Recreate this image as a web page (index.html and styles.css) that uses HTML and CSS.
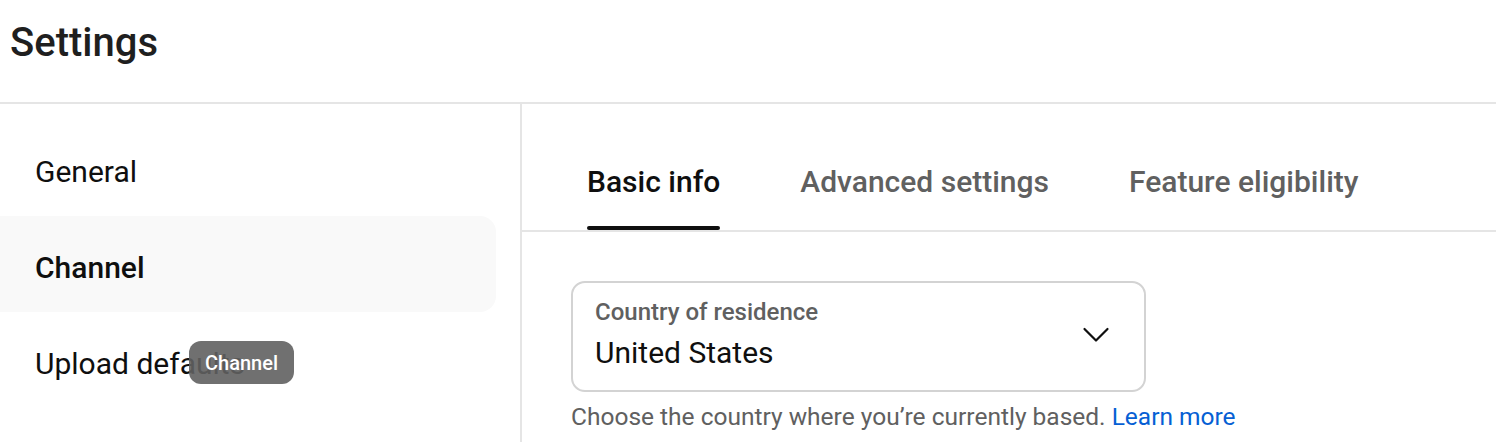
FILE: index.html
```html
<!DOCTYPE html>
<html lang="en">
<head>
<meta charset="utf-8">
<title>Settings</title>
<link rel="stylesheet" href="styles.css">
</head>
<body>
<div class="page">
  <header class="header">
    <h1 class="title">Settings</h1>
  </header>
  <div class="body">
    <nav class="sidebar">
      <div class="nav-item">General</div>
      <div class="nav-item active">Channel</div>
      <div class="nav-item">Upload defaults
        <div class="tooltip">Channel</div>
      </div>
    </nav>
    <main class="main">
      <div class="tabs">
        <div class="tab active"><span class="tab-label">Basic info</span><span class="indicator"></span></div>
        <div class="tab"><span class="tab-label">Advanced settings</span><span class="indicator"></span></div>
        <div class="tab"><span class="tab-label">Feature eligibility</span><span class="indicator"></span></div>
      </div>
      <div class="content">
        <div class="select">
          <div class="select-text">
            <div class="select-label">Country of residence</div>
            <div class="select-value">United States</div>
          </div>
          <svg class="chevron" width="28" height="16" viewBox="0 0 28 16" aria-hidden="true">
            <path d="M2.5 2 L14 13.5 L25.5 2" fill="none" stroke="#0f0f0f" stroke-width="2.2" stroke-linecap="round" stroke-linejoin="round"/>
          </svg>
        </div>
        <p class="helper">Choose the country where you’re currently based. <a class="link" href="#">Learn more</a></p>
      </div>
    </main>
  </div>
</div>
</body>
</html>
```

FILE: styles.css
```css
* { box-sizing: border-box; }
html, body { margin: 0; padding: 0; background: #ffffff; }
body {
  font-family: Roboto, "Noto Sans", "Liberation Sans", sans-serif;
  color: #0f0f0f;
  width: 1496px;
  height: 442px;
  overflow: hidden;
}
.page { display: flex; flex-direction: column; height: 100%; }
.header {
  height: 104px;
  border-bottom: 2px solid #e5e5e5;
  display: flex;
  align-items: flex-start;
  padding: 19px 0 0 10px;
}
.title {
  margin: 0;
  font-size: 40px;
  line-height: 48px;
  font-weight: 500;
  color: #1f1f1f;
}
.body { display: flex; flex: 1; }
.sidebar {
  width: 522px;
  flex: none;
  border-right: 2px solid #e5e5e5;
  padding: 16px 24px 0 0;
  display: flex;
  flex-direction: column;
}
.nav-item {
  position: relative;
  height: 96px;
  display: flex;
  align-items: center;
  padding: 8px 0 0 35px;
  font-size: 30px;
  line-height: 40px;
  color: #0f0f0f;
}
.nav-item.active {
  background: #f9f9f9;
  border-radius: 0 16px 16px 0;
  font-weight: 500;
}
.tooltip {
  position: absolute;
  left: 189px;
  top: 29px;
  height: 43px;
  padding: 0 16px;
  display: flex;
  align-items: center;
  background: rgba(97, 97, 97, 0.9);
  color: #ffffff;
  border-radius: 12px;
  font-size: 20px;
  line-height: 24px;
  font-weight: 500;
}
.main { flex: 1; display: flex; flex-direction: column; }
.tabs {
  height: 128px;
  border-bottom: 2px solid #e5e5e5;
  display: flex;
  gap: 80px;
  padding-left: 65px;
}
.tab {
  display: flex;
  flex-direction: column;
  padding-top: 56px;
  color: #606060;
  font-size: 30px;
  line-height: 44px;
  font-weight: 500;
}
.tab.active { color: #0f0f0f; }
.tab-label { display: block; white-space: nowrap; }
.indicator {
  margin-top: auto;
  height: 4px;
  border-radius: 2px;
  background: transparent;
}
.tab.active .indicator { background: #0f0f0f; }
.content { padding: 49px 0 0 49px; }
.select {
  width: 575px;
  height: 111px;
  border: 2px solid #d3d3d3;
  border-radius: 14px;
  display: flex;
  align-items: center;
  justify-content: space-between;
  padding: 0 34px 0 22px;
}
.select-text { display: flex; flex-direction: column; margin-top: -5px; }
.select-label {
  font-size: 24px;
  line-height: 32px;
  font-weight: 500;
  color: #606060;
}
.select-value {
  font-size: 30px;
  line-height: 40px;
  color: #0f0f0f;
  margin-top: 5px;
}
.chevron { display: block; margin-top: -4px; }
.helper {
  margin: 9px 0 0 0;
  font-size: 24.5px;
  line-height: 32px;
  color: #606060;
}
.link { color: #065fd4; text-decoration: none; }
```
